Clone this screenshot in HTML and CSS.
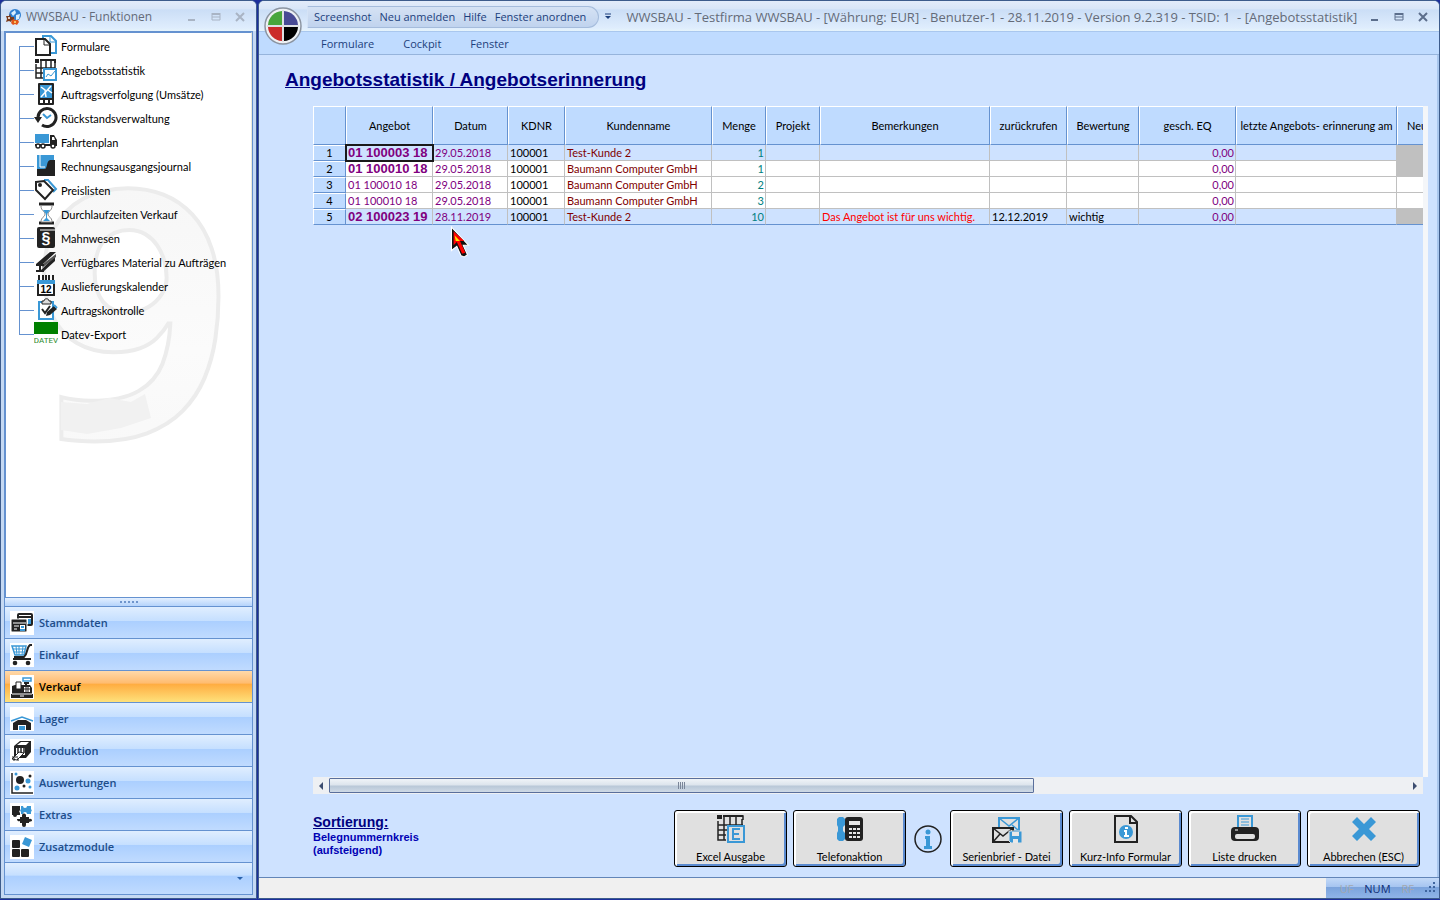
FILE: index.html
```html
<!DOCTYPE html>
<html lang="de">
<head>
    <meta charset="UTF-8">
    <meta name="viewport" content="width=device-width, initial-scale=1.0">
    <title>WWSBAU - Angebotsstatistik</title>
    <link rel="stylesheet" href="styles.css">
</head>
<body>
    <div class="desktop">
        <aside class="window side">
            <header class="titlebar">
                <svg class="app-icon" viewBox="0 0 16 16"><circle cx="9" cy="6" r="6" fill="#2f7fd0"/><path d="M5 4l4-3 1 3-3 3zM10 6l4-1-1 5-3 1z" fill="#d9efff"/><path d="M0 7h3l1-2 1 3h3v3H6l-1 2-2-1-3 1 1-3z" fill="#7a3b1c"/><path d="M6 11l2-1 1 1h3l1 2-2 3-2-1-2 1-2-2z" fill="#e2571a"/><circle cx="3" cy="9" r="1" fill="#fff"/><circle cx="9" cy="13" r="1" fill="#ffe27a"/></svg>
                <span class="title">WWSBAU - Funktionen</span>
                <div class="controls faded">
                    <button type="button" aria-label="Minimieren"><svg viewBox="0 0 10 10"><path d="M1 8h7" stroke-width="2"/></svg></button>
                    <button type="button" aria-label="Maximieren"><svg viewBox="0 0 10 10"><path d="M1 2h8" stroke-width="2"/><path d="M1 5h8M1 1v7h8V1"/></svg></button>
                    <button type="button" aria-label="Schließen"><svg viewBox="0 0 10 10"><path d="M1 1l8 8M9 1L1 9" stroke-width="2"/></svg></button>
                </div>
            </header>
            <div class="side-body">
                <div class="tree">
                    <svg class="watermark" viewBox="0 0 180 270" aria-hidden="true">
                        <defs><linearGradient id="nine" x1="0" y1="0" x2="0" y2="1"><stop offset="0" stop-color="#f4f4f4"/><stop offset=".6" stop-color="#fbfbfb"/><stop offset="1" stop-color="#f6f6f6"/></linearGradient></defs>
                        <text x="-10" y="254">9</text>
                        <path d="M18 218l26 2 22-6 22 4 14-8 6 24-30 10-34 6-26-4z" fill="#f1f1f1"/>
                    </svg>
                    <ul>
                        <li><span class="branch"></span><a href="#"><svg viewBox="0 0 24 24"><path d="M9 5V2h8l5 5v12h-5" fill="#fff" stroke="#3a98d6" stroke-width="2"/><path d="M16 1v7h6" fill="none" stroke="#3a98d6"/><path d="M2 5h9l5 5v11H2z" fill="#fff" stroke="#222" stroke-width="2"/><path d="M10 5v6h6" fill="none" stroke="#222"/></svg>Formulare</a></li>
                        <li><span class="branch"></span><a href="#"><svg viewBox="0 0 24 24"><path d="M1 1h4v4H1z" fill="#222"/><path d="M6 2h15v3" fill="none" stroke="#222" stroke-width="2"/><path d="M2 6v14h7M2 10h19M2 15h7M7 3v17M12 3v7M17 3v7M21 5v5" fill="none" stroke="#222" stroke-width="1.5"/><path d="M10 11h12v11H10z" fill="#fff" stroke="#3a98d6" stroke-width="2"/><path d="M12 19l2-3 3 2 4-5" fill="none" stroke="#3a98d6"/></svg>Angebotsstatistik</a></li>
                        <li><span class="branch"></span><a href="#"><svg viewBox="0 0 24 24"><rect x="4" y="1" width="16" height="22" rx="1" fill="#222"/><path d="M6 3h12v13H6z" fill="#3a98d6"/><path d="M7 15l10-11M7 5l4 3 1 7M14 8l4 3" fill="none" stroke="#fff" stroke-width="1.5"/><path d="M6 18h3v3H6zM11 18h3v3h-3zM16 18h2v3h-2z" fill="#fff"/></svg>Auftragsverfolgung (Umsätze)</a></li>
                        <li><span class="branch"></span><a href="#"><svg viewBox="0 0 24 24"><path d="M4 12a9 9 0 1 1 4 7" fill="none" stroke="#222" stroke-width="3"/><path d="M0 11h8l-4 6z" fill="#222"/><path d="M9 8l4 4 4-3" fill="none" stroke="#3a98d6" stroke-width="2"/></svg>Rückstandsverwaltung</a></li>
                        <li><span class="branch"></span><a href="#"><svg viewBox="0 0 24 24"><path d="M1 4h14v9H1z" fill="#3a98d6"/><path d="M16 5h4l3 5v6h-7z" fill="#222"/><path d="M18 7h2l1 3h-3z" fill="#fff"/><path d="M1 14h21v2H1z" fill="#222"/><g fill="#fff" stroke="#222" stroke-width="1.5"><circle cx="4" cy="16" r="2"/><circle cx="9" cy="16" r="2"/><circle cx="19" cy="16" r="2"/></g></svg>Fahrtenplan</a></li>
                        <li><span class="branch"></span><a href="#"><svg viewBox="0 0 24 24"><path d="M3 1h17v6l-9 8H3z" fill="#3a98d6"/><path d="M6 1v12h5" fill="none" stroke="#fff" stroke-width="1"/><path d="M3 22v-7h7c4 0 2-8 6-9h5v16z" fill="#222"/></svg>Rechnungsausgangsjournal</a></li>
                        <li><span class="branch"></span><a href="#"><svg viewBox="0 0 24 24"><path d="M10 2h4l8 9-3 3" fill="none" stroke="#3a98d6" stroke-width="2"/><path d="M2 4l8-1 9 9-8 9-9-9z" fill="#fff" stroke="#222" stroke-width="2"/><circle cx="6" cy="7" r="2" fill="#222"/></svg>Preislisten</a></li>
                        <li><span class="branch"></span><a href="#"><svg viewBox="0 0 24 24"><path d="M5 2h15M5 21h15" stroke="#222" stroke-width="3"/><path d="M7 4c0 5 4 5 4 8s-4 3-4 8h11c0-5-4-5-4-8s4-3 4-8" fill="#fff" stroke="#888"/><path d="M9 8h7l-3 4v4l3 3H9l3-3v-4z" fill="#3a98d6"/></svg>Durchlaufzeiten Verkauf</a></li>
                        <li><span class="branch"></span><a href="#"><svg viewBox="0 0 24 24"><rect x="3" y="1" width="18" height="21" rx="2" fill="#222"/><path d="M6 4h15" stroke="#fff"/><text x="12" y="18" class="glyph">§</text></svg>Mahnwesen</a></li>
                        <li><span class="branch"></span><a href="#"><svg viewBox="0 0 24 24"><path d="M2 14L16 2h6L9 14zM7 20L21 6v5L9 22z" fill="#222"/><path d="M9 14l13-10v3L8 18z" fill="#555"/><path d="M2 15h8M2 21h8M6 15v6" stroke="#222" stroke-width="2"/></svg>Verfügbares Material zu Aufträgen</a></li>
                        <li><span class="branch"></span><a href="#"><svg viewBox="0 0 24 24"><path d="M3 6h18v4H3z" fill="#3a98d6"/><path d="M5 1v5M9 1v5M12 1v5M15 1v5M19 1v5" stroke="#222" stroke-width="2"/><path d="M4 10v11h16V10" fill="#fff" stroke="#222" stroke-width="2"/><text x="12" y="19" class="day">12</text></svg>Auslieferungskalender</a></li>
                        <li><span class="branch"></span><a href="#"><svg viewBox="0 0 24 24"><path d="M5 4h14v17H5z" fill="#fff" stroke="#3a98d6" stroke-width="2"/><path d="M8 6V3h2c0-3 5-3 5 0h2v3z" fill="#ddd" stroke="#222"/><path d="M8 11l3 4 5-7" fill="none" stroke="#222" stroke-width="2"/><path d="M12 18l1-4 7-6 3 3-7 6z" fill="#222"/><path d="M20 7l3 3" stroke="#3a98d6" stroke-width="2"/></svg>Auftragskontrolle</a></li>
                        <li><span class="branch"></span><a href="#"><svg viewBox="0 0 24 24"><path d="M0 0h24v12H0z" fill="#008000"/><text x="12" y="21" class="datev">DATEV</text></svg>Datev-Export</a></li>
                    </ul>
                </div>
                <div class="splitter"><i></i><i></i><i></i><i></i><i></i></div>
                <nav class="modules">
                    <button type="button"><svg viewBox="0 0 24 24"><rect x="8" y="3" width="14" height="11" rx="1" fill="#fff" stroke="#222" stroke-width="2"/><path d="M8 6h14" stroke="#222" stroke-width="2"/><path d="M18 8h3v5h-3z" fill="#3a98d6"/><rect x="1" y="8" width="16" height="13" rx="1" fill="#222" stroke="#fff"/><path d="M3 12h13M4 15h5M4 18h3" stroke="#fff"/><path d="M10 14h5v6h-5z" fill="#fff"/><path d="M11 15h3v2h-3zM10 18h5v2h-5z" fill="#3a98d6"/></svg>Stammdaten</button>
                    <button type="button"><svg viewBox="0 0 24 24"><path d="M2 3h14l-2 9H5z" fill="#fff" stroke="#3a98d6" stroke-width="1.5"/><path d="M3 6h12M4 9h11M6 3l1 9M9 3v9M13 3l-1 9" stroke="#3a98d6"/><path d="M22 2h-2c-4 3-2 9-6 12H4" fill="none" stroke="#222" stroke-width="2"/><path d="M3 16h18" stroke="#222" stroke-width="2"/><circle cx="5" cy="20" r="2.3" fill="#222"/><circle cx="18" cy="20" r="2.3" fill="#222"/></svg>Einkauf</button>
                    <button type="button" class="active"><svg viewBox="0 0 24 24"><path d="M13 3h8v3h-8z" fill="#fff" stroke="#3a98d6" stroke-width="1.5"/><path d="M16 7v4M14 8h5" stroke="#222" stroke-width="2"/><path d="M2 11l3-1h15l2 3v6H2zM1 19h22v4H1z" fill="#222"/><path d="M6 7h5v7H6z" fill="#fff" stroke="#222"/><path d="M14 12h6v5h-6z" fill="#fff"/><path d="M14 14h6M16 12v5M18 12v5" stroke="#222"/><path d="M2 19h20M10 21h4" stroke="#fff"/></svg>Verkauf</button>
                    <button type="button"><svg viewBox="0 0 24 24"><path d="M1 14l11-4 11 4" fill="none" stroke="#3a98d6" stroke-width="1.5"/><path d="M3 23v-7l5-3h8l5 3v7z" fill="#222"/><path d="M8 18h8v5H8z" fill="#fff"/><path d="M9 19h6v4H9z" fill="#3a98d6"/></svg>Lager</button>
                    <button type="button"><svg viewBox="0 0 24 24"><path d="M4 7l6-5h11v11l-5 6H4z" fill="#222"/><path d="M7 6l4-3h8l-3 3zM6 9h9v7H6z" fill="#fff"/><path d="M8 9v5M11 9v5M14 9v5" stroke="#222" stroke-width="1.5"/><path d="M2 20l7-7 5 1-7 7z" fill="#fff" stroke="#222"/><path d="M4 19v3M8 19v3M2 18h6" stroke="#222"/></svg>Produktion</button>
                    <button type="button"><svg viewBox="0 0 24 24"><path d="M2 2v20h21" fill="none" stroke="#222" stroke-width="1.5"/><circle cx="10" cy="9" r="4" fill="#222"/><circle cx="20" cy="5" r="1.5" fill="#222"/><circle cx="14" cy="15" r="1.5" fill="#222"/><g fill="#3a98d6"><circle cx="6" cy="3" r="1.5"/><circle cx="18" cy="10" r="2.5"/><circle cx="7" cy="17" r="2.5"/><circle cx="20" cy="16" r="1.5"/></g></svg>Auswertungen</button>
                    <button type="button"><svg viewBox="0 0 24 24"><path d="M2 3h8v4a2 2 0 0 0 0 3v2H7a2 2 0 0 1-4 0H2z" fill="#222"/><path d="M11 3h2a2 2 0 0 0 4 0h4v3a2 2 0 0 1 0 3v2h-4a2 2 0 0 0-4 0h-2V9a2 2 0 0 1 0-3z" fill="#3a98d6"/><path d="M12 13a2 2 0 0 1 4-1v2h3v2a2 2 0 0 1 3 2l-3 1v1h-3v2a2 2 0 0 1-4 0v-2h-2v-2a2 2 0 0 1-3-2h3v-2h2z" fill="#222"/></svg>Extras</button>
                    <button type="button"><svg viewBox="0 0 24 24"><g fill="#222"><rect x="2" y="5" width="8" height="8" rx="1"/><rect x="2" y="14" width="8" height="8" rx="1"/><rect x="11" y="14" width="8" height="8" rx="1"/></g><path d="M15 2l7 3-3 7-7-3z" fill="#3a98d6"/></svg>Zusatzmodule</button>
                    <div class="overflow"><button type="button" aria-label="Weitere Module"><svg viewBox="0 0 6 5"><path d="M0 1h6L3 4z" fill="#2a62ab"/></svg></button></div>
                </nav>
            </div>
        </aside>

        <main class="window main">
            <header class="titlebar">
                <button type="button" class="orb" aria-label="Anwendungsmenü">
                    <svg viewBox="0 0 38 38">
                        <circle cx="19" cy="19" r="18" fill="#eef1f5" stroke="#8b94a1" stroke-width="1.5"/>
                        <path d="M18 18V4A15 15 0 0 0 4 18z" fill="#48a63c"/><path d="M20 18V4a15 15 0 0 1 14 14z" fill="#484a94"/>
                        <path d="M18 20v14A15 15 0 0 1 4 20z" fill="#cb2b2b"/><path d="M20 20v14a15 15 0 0 0 14-14z" fill="#000"/>
                        <path d="M19 3v32M3 19h32" stroke="#dfe1e4" stroke-width="2"/>
                    </svg>
                </button>
                <div class="quick">
                    <a href="#">Screenshot</a><a href="#">Neu anmelden</a><a href="#">Hilfe</a><a href="#">Fenster anordnen</a>
                </div>
                <button type="button" class="quick-more" aria-label="Anpassen"><svg viewBox="0 0 6 7"><path d="M0 1h6" stroke="#1c3f7c"/><path d="M0 3h6L3 6z" fill="#1c3f7c"/></svg></button>
                <span class="title">WWSBAU - Testfirma WWSBAU - [Währung: EUR] - Benutzer-1 - 28.11.2019 - Version 9.2.319 - TSID: 1&nbsp; - [Angebotsstatistik]</span>
                <div class="controls">
                    <button type="button" aria-label="Minimieren"><svg viewBox="0 0 10 10"><path d="M1 8h7" stroke-width="2"/></svg></button>
                    <button type="button" aria-label="Maximieren"><svg viewBox="0 0 10 10"><path d="M1 2h8" stroke-width="2"/><path d="M1 5h8M1 1v7h8V1"/></svg></button>
                    <button type="button" aria-label="Schließen"><svg viewBox="0 0 10 10"><path d="M1 1l8 8M9 1L1 9" stroke-width="2"/></svg></button>
                </div>
            </header>
            <nav class="menubar"><a href="#">Formulare</a><a href="#">Cockpit</a><a href="#">Fenster</a></nav>

            <section class="content">
                <h1>Angebotsstatistik / Angebotserinnerung</h1>
                <div class="grid-area">
                    <div class="grid">
                        <table>
                            <colgroup><col class="w33"><col class="w87"><col class="w75"><col class="w57"><col class="w147"><col class="w54"><col class="w54"><col class="w170"><col class="w77"><col class="w72"><col class="w97"><col class="w161"><col class="w87"></colgroup>
                            <thead>
                                <tr><th></th><th>Angebot</th><th>Datum</th><th>KDNR</th><th>Kundenname</th><th>Menge</th><th>Projekt</th><th>Bemerkungen</th><th>zurückrufen</th><th>Bewertung</th><th>gesch. EQ</th><th>letzte Angebots- erinnerung am</th><th class="cut">Neu</th></tr>
                            </thead>
                            <tbody>
                                <tr class="marked"><th>1</th><td class="purple bold selected">01 100003 18</td><td class="purple">29.05.2018</td><td>100001</td><td class="maroon">Test-Kunde 2</td><td class="teal num">1</td><td></td><td></td><td></td><td></td><td class="purple num">0,00</td><td></td><td class="locked"></td></tr>
                                <tr><th>2</th><td class="purple bold">01 100010 18</td><td class="purple">29.05.2018</td><td>100001</td><td class="maroon">Baumann Computer GmbH</td><td class="teal num">1</td><td></td><td></td><td></td><td></td><td class="purple num">0,00</td><td></td><td class="locked"></td></tr>
                                <tr><th>3</th><td class="purple">01 100010 18</td><td class="purple">29.05.2018</td><td>100001</td><td class="maroon">Baumann Computer GmbH</td><td class="teal num">2</td><td></td><td></td><td></td><td></td><td class="purple num">0,00</td><td></td><td></td></tr>
                                <tr><th>4</th><td class="purple">01 100010 18</td><td class="purple">29.05.2018</td><td>100001</td><td class="maroon">Baumann Computer GmbH</td><td class="teal num">3</td><td></td><td></td><td></td><td></td><td class="purple num">0,00</td><td></td><td></td></tr>
                                <tr class="marked"><th>5</th><td class="purple bold">02 100023 19</td><td class="purple">28.11.2019</td><td>100001</td><td class="maroon">Test-Kunde 2</td><td class="teal num">10</td><td></td><td class="red">Das Angebot ist für uns wichtig.</td><td>12.12.2019</td><td>wichtig</td><td class="purple num">0,00</td><td></td><td class="locked"></td></tr>
                            </tbody>
                        </table>
                    </div>
                    <div class="scrollbar">
                        <button type="button" aria-label="Nach links"><svg viewBox="0 0 6 10"><path d="M5 1v8L1 5z" fill="#3c4d70"/></svg></button>
                        <div class="track"><div class="thumb"><i></i><i></i><i></i><i></i></div></div>
                        <button type="button" aria-label="Nach rechts"><svg viewBox="0 0 6 10"><path d="M1 1v8l4-4z" fill="#3c4d70"/></svg></button>
                    </div>
                </div>
                <footer class="actions">
                    <div class="sorting"><h2>Sortierung:</h2><p>Belegnummernkreis<br>(aufsteigend)</p></div>
                    <button type="button" class="action"><svg viewBox="0 0 28 28"><path d="M6 1h20v4M1 6v19h8M1 10h25M1 15h10M1 20h8M7 1v24M13 1v9M19 1v9M25 4v6" fill="none" stroke="#222" stroke-width="1.5"/><path d="M0 0h5v4H0zM6 0h20v2H6z" fill="#222"/><path d="M11 11h16v16H11z" fill="#e0e0e0" stroke="#3a98d6" stroke-width="2"/><path d="M23 14h-7v10h7M16 19h6" fill="none" stroke="#3a98d6" stroke-width="2"/></svg>Excel Ausgabe</button>
                    <button type="button" class="action"><svg viewBox="0 0 28 28"><rect x="9" y="2" width="18" height="24" rx="3" fill="#222"/><path d="M3 2h4l2 2v6l-2 2v4l2 2v6l-2 2H3l-2-2v-6l1-2v-4l-1-2V4z" fill="#3a98d6"/><path d="M13 6h11v4H13zM13 13h3v2h-3zM17 13h3v2h-3zM21 13h3v2h-3zM13 17h3v2h-3zM17 17h3v2h-3zM21 17h3v2h-3zM13 21h3v2h-3zM17 21h3v2h-3zM21 21h3v2h-3z" fill="#e8e8e8"/></svg>Telefonaktion</button>
                    <button type="button" class="info" aria-label="Information"><svg viewBox="0 0 28 28"><circle cx="14" cy="14" r="13" fill="none" stroke="#222" stroke-width="1.5"/><circle cx="14" cy="7" r="2.5" fill="#3a98d6"/><path d="M11 11h5v10h2v3h-8v-3h2v-7h-1z" fill="#3a98d6"/></svg></button>
                    <button type="button" class="action"><svg class="wide" viewBox="0 0 30 28"><path d="M7 3h20v13H7z" fill="#e0e0e0" stroke="#3a98d6" stroke-width="2"/><path d="M7 3l10 8 10-8M20 10l6 5" fill="none" stroke="#3a98d6" stroke-width="1.5"/><path d="M1 13h20v14H1z" fill="#e0e0e0" stroke="#222" stroke-width="2"/><path d="M1 13l10 8 10-8M1 27l7-8" fill="none" stroke="#222" stroke-width="1.5"/><path d="M17 16h13v12H19l-2-2z" fill="#3a98d6" stroke="#e0e0e0"/><path d="M20 17h7v4h-7zM21 24h5v4h-5z" fill="#e8e8e8"/></svg>Serienbrief - Datei</button>
                    <button type="button" class="action"><svg viewBox="0 0 28 28"><path d="M3 1h16l6 6v20H3z" fill="#e0e0e0" stroke="#222" stroke-width="2"/><path d="M18 1v7h7" fill="none" stroke="#222" stroke-width="2"/><circle cx="14" cy="17" r="7" fill="#3a98d6"/><path d="M13 12h3v2h-3zM12 15h3v5h2v2h-5v-2h1v-3h-1z" fill="#fff"/></svg>Kurz-Info Formular</button>
                    <button type="button" class="action"><svg viewBox="0 0 28 28"><path d="M7 12V1h14v11" fill="#e0e0e0" stroke="#3a98d6" stroke-width="2"/><path d="M10 4h8M10 7h8M10 10h8" stroke="#3a98d6"/><rect y="12" width="28" height="14" rx="4" fill="#222"/><rect x="4" y="19" width="20" height="5" rx="2" fill="#e0e0e0"/><path d="M4 15h3" stroke="#fff"/></svg>Liste drucken</button>
                    <button type="button" class="action"><svg viewBox="0 0 28 28"><path d="M2 7l5-5 7 7 7-7 5 5-7 7 7 7-5 5-7-7-7 7-5-5 7-7z" fill="#3a98d6"/></svg>Abbrechen (ESC)</button>
                </footer>
                <svg class="pointer" viewBox="0 0 18 30"><path d="M1 1v22l5-4 4 9 3 1 3-2-4-9h5z" fill="#111" stroke="#fff"/><path d="M3 5v13l3-3 5 11 3-1-5-11h4z" fill="#f00"/><path d="M4 9l5 5H5z" fill="#ffe400"/></svg>
            </section>

            <footer class="status">
                <div class="keys"><span class="off">UF</span><span>NUM</span><span class="off">RF</span>
                    <svg viewBox="0 0 12 12"><path d="M8 0h2v2H8zM4 4h2v2H4zM8 4h2v2H8zM0 8h2v2H0zM4 8h2v2H4zM8 8h2v2H8z" fill="#3f659f"/></svg>
                </div>
            </footer>
        </main>
    </div>
</body>
</html>
```
FILE: styles.css
```css
* { box-sizing: border-box; }
body { margin: 0; background: #1d2f9c; font-family: Lato, "Liberation Sans", sans-serif; font-size: 11px; color: #000; }
button { font: inherit; color: inherit; border: none; background: none; padding: 0; margin: 0; }
a { color: inherit; text-decoration: none; }
svg { display: block; flex: none; }

.desktop { display: flex; gap: 1px; height: 100vh; padding-bottom: 1px; }
.window { display: flex; flex-direction: column; border: 1px solid #3d5c8c; border-radius: 6px 6px 0 0; overflow: hidden; background: #c5d9f3; }
.side { flex: none; width: 257px; padding: 0 3px 3px; }
.main { flex: 1; min-width: 0; position: relative; }

/* title bars */
.titlebar { flex: none; display: flex; align-items: center; height: 30px; padding-top: 1px; background: linear-gradient(#e3ecfa 0, #d9e6f8 25%, #cbdef6 30%, #dfedfd 90%, #e6f4fb 100%); font-family: "Open Sans", sans-serif; }
.title { font-size: 12px; color: #646b78; white-space: nowrap; }
.main .title { font-size: 13px; }
.side .titlebar { margin: 0 -3px; padding-left: 5px; }
.app-icon { width: 16px; height: 16px; margin-right: 4px; }
.controls { display: flex; gap: 14px; margin-left: auto; padding-right: 11px; }
.controls svg { width: 10px; height: 10px; fill: none; stroke: #5c6e8c; }
.controls.faded svg { stroke: #a9b4c4; }

/* function tree */
.side-body { flex: 1; display: flex; flex-direction: column; min-height: 0; border: 1px solid #6592d0; background: #c0dbff; }
.tree { flex: 1; min-height: 0; position: relative; overflow: hidden; background: #fff; border: 1px solid #6592d0; border-right-color: #ece9d8; }
.watermark { position: absolute; left: 37px; top: 151px; width: 180px; height: 270px; overflow: visible; }
.watermark text { font: bold 346px "Open Sans", sans-serif; fill: url(#nine); stroke: #ececec; stroke-width: 4px; }
.tree ul { position: relative; list-style: none; margin: 0; padding: 1px 0 0 13px; }
.tree li { display: flex; height: 24px; }
.tree a { display: flex; align-items: center; gap: 3px; white-space: nowrap; }
.tree a svg { width: 24px; height: 24px; }
.branch { width: 15px; background: linear-gradient(#6592d0, #6592d0) 0 12px / 15px 1px no-repeat, linear-gradient(#6592d0, #6592d0) 0 0 / 1px 100% no-repeat; }
.tree li:first-child .branch { background-position: 0 12px, 0 12px; }
.tree li:last-child .branch { background-size: 15px 1px, 1px 12px; }
.glyph { font: bold 16px "Liberation Sans", sans-serif; text-anchor: middle; fill: #fff; }
.day { font: bold 10px "Liberation Sans", sans-serif; text-anchor: middle; }
.datev { font: 8px Roboto, sans-serif; text-anchor: middle; fill: #2a8a2a; }

/* module list */
.splitter { flex: none; display: flex; justify-content: center; gap: 2px; height: 8px; padding-top: 3px; background: linear-gradient(#e3efff, #b5d3fb); }
.splitter i { width: 2px; height: 2px; background: #6f95cc; }
.modules button { display: flex; align-items: center; gap: 5px; width: 100%; height: 32px; padding-left: 5px; border-top: 1px solid #6592d0; background: linear-gradient(#e0eeff 0, #c5dfff 45%, #abcfff 46%, #c0dbff 100%); font-family: "Open Sans", sans-serif; font-weight: 600; color: #204d89; }
.modules svg { width: 24px; height: 24px; background: #fff; }
.modules .active { background: linear-gradient(#ffd9aa 0, #ffbb6e 40%, #ffab3f 41%, #fee17b 100%); color: #000; }
.overflow { display: flex; justify-content: flex-end; align-items: center; height: 32px; padding-right: 9px; border-top: 1px solid #6592d0; background: linear-gradient(#e0eeff 0, #c5dfff 40%, #abcfff 41%, #c0dbff 100%); }
.modules .overflow button { width: 6px; height: 5px; padding: 0; border: none; background: none; }
.overflow svg { width: 6px; height: 5px; background: none; }

/* main window head */
.main .titlebar { padding-left: 48px; }
.orb { position: absolute; left: 5px; top: 6px; width: 38px; height: 38px; }
.quick { display: flex; align-items: center; gap: 8px; height: 22px; padding: 0 12px 0 6px; border: 1px solid #a5bcdc; border-left-color: #d5e3f6; border-radius: 0 11px 11px 0; background: linear-gradient(#d5e2f4, #c0d3ee); color: #1c3f7c; white-space: nowrap; }
.quick-more { margin: 0 15px 0 6px; }
.quick-more svg { width: 6px; height: 7px; }
.menubar { flex: none; display: flex; gap: 29px; height: 24px; padding-left: 62px; align-items: center; background: #bfdbff; border-top: 1px solid #a9c7ee; border-bottom: 1px solid #96b4dc; font-family: "Open Sans", sans-serif; color: #1c3f7c; }

.content { flex: 1; min-height: 0; position: relative; display: flex; flex-direction: column; padding: 13px 9px 10px 26px; background: #cee2ff; border-right: 2px solid #a9c7ee; }
h1 { margin: 0; font-family: "Liberation Sans", Arial, sans-serif; font-size: 19px; line-height: 23px; color: #000080; text-decoration: underline; }
.content h1 { margin-bottom: 15px; }

/* offer grid */
.grid-area { flex: 1; min-height: 0; display: flex; flex-direction: column; margin: 0 0 16px 28px; }
.grid { flex: 1; min-height: 0; overflow: hidden; border-right: 5px solid #f4f6f9; }
table { table-layout: fixed; width: 1171px; border-collapse: separate; border-spacing: 0; }
.w33 { width: 33px; }
.w54 { width: 54px; }
.w57 { width: 57px; }
.w72 { width: 72px; }
.w75 { width: 75px; }
.w77 { width: 77px; }
.w87 { width: 87px; }
.w97 { width: 97px; }
.w147 { width: 147px; }
.w161 { width: 161px; }
.w170 { width: 170px; }
th { padding: 0; font-weight: normal; background: #bfdbff; border: 1px solid #fff; border-right-color: #6592d0; border-bottom-color: #6592d0; white-space: nowrap; overflow: hidden; }
thead th { height: 39px; }
thead .cut { text-align: left; padding-left: 9px; }
tbody th { height: 16px; line-height: 14px; }
td { height: 16px; padding: 1px 2px 0; line-height: 14px; background: #fff; border-right: 1px solid #c0c0c0; border-bottom: 1px solid #c0c0c0; white-space: nowrap; }
.marked td { background: #cee2ff; }
tr:last-child td { border-bottom-color: #6592d0; }
td.locked, .marked td.locked { background: #c0c0c0; }
.selected { outline: 2px solid #1a1a1a; outline-offset: -1px; }
.purple { color: #800080; }
.maroon { color: #800000; }
.teal { color: #008080; }
.red { color: #f00; }
.bold { font-family: "Liberation Sans", Arial, sans-serif; font-weight: bold; font-size: 13px; }
.num { text-align: right; padding-right: 1px; }

.scrollbar { flex: none; display: flex; height: 17px; margin-right: 5px; background: #eef0f3; }
.scrollbar button { display: flex; align-items: center; justify-content: center; width: 16px; }
.scrollbar svg { width: 6px; height: 10px; }
.track { flex: 1; padding: 1px 0; }
.thumb { display: flex; align-items: center; justify-content: center; gap: 1px; width: 65.4%; height: 15px; border: 1px solid #5a6f9c; border-radius: 1px; background: linear-gradient(#f0f4f8 0, #dde5ed 45%, #b9c8d8 55%, #cfdae6 100%); }
.thumb i { width: 1px; height: 7px; background: #7a8699; }

/* bottom buttons */
.actions { flex: none; display: flex; align-items: center; gap: 6px; padding-right: 8px; }
.sorting { align-self: flex-start; margin: 4px auto 0 28px; font-family: "Liberation Sans", Arial, sans-serif; font-weight: bold; color: #0000b4; }
.sorting h2 { margin: 0; font-size: 14px; line-height: 17px; color: #000080; text-decoration: underline; }
.sorting p { margin: 0; line-height: 13px; }
.action { display: flex; flex-direction: column; align-items: center; justify-content: space-between; width: 113px; height: 57px; padding: 4px 0 3px; border: 1px solid #000; border-radius: 3px; background: #e0e0e0; box-shadow: inset 2px 2px #fff, inset -2px -2px #5a8ad0; white-space: nowrap; }
.action svg { width: 28px; height: 28px; }
.action .wide { width: 30px; }
.info { margin: 0 2px; }
.info svg { width: 28px; height: 28px; }
.pointer { position: absolute; left: 191px; top: 171px; width: 20px; height: 32px; }

.status { flex: none; display: flex; justify-content: flex-end; height: 21px; border-top: 1px solid #6285b8; background: #f0f0f0; font-family: "Open Sans", sans-serif; }
.keys { display: flex; align-items: center; gap: 11px; padding: 0 2px 0 14px; background: linear-gradient(#c3d9f8 0, #a5c4f0 45%, #7ba3dc 46%, #8fb4e8 100%); color: #0d2c75; }
.keys .off { color: #a3a8ae; }
.keys svg { width: 12px; height: 12px; }
```
